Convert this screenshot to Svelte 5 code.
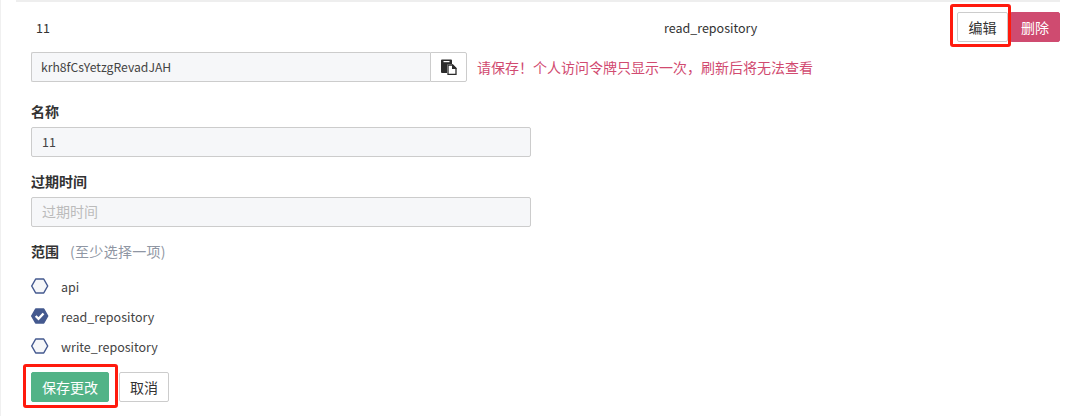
<script>
  const scopes = [
    { name: 'api', checked: false },
    { name: 'read_repository', checked: true },
    { name: 'write_repository', checked: false }
  ];
</script>

<div class="page">
  <div class="panel">
    <div class="row">
      <span class="name latin">11</span>
      <span class="scope latin">read_repository</span>
      <div class="actions">
        <button class="btn">编辑</button>
        <button class="btn danger">删除</button>
      </div>
    </div>

    <div class="token-row">
      <div class="token-group">
        <div class="field token latin">krh8fCsYetzgRevadJAH</div>
        <button class="copy" aria-label="复制">
          <svg width="16" height="16" viewBox="0 0 16 16">
            <path fill="#2b2b2b" d="M0 1.5A1 1 0 0 1 1 .5h9a1 1 0 0 1 1 1V5H7.5A1.5 1.5 0 0 0 6 6.500V14H1a1 1 0 0 1-1-1z" />
            <rect x="2.500" y="2" width="6" height="1.200" fill="#fff" />
            <path fill="#fff" stroke="#2b2b2b" stroke-width="1.300" d="M7 6h4.500L15 9.500V15.300H7z" />
            <path fill="#2b2b2b" d="M11 5.500h1L15.500 9v1H11z" />
          </svg>
        </button>
      </div>
      <span class="warn">请保存！个人访问令牌只显示一次，刷新后将无法查看</span>
    </div>

    <div class="group first">
      <div class="label">名称</div>
      <div class="field wide latin">11</div>
    </div>

    <div class="group">
      <div class="label">过期时间</div>
      <div class="field wide placeholder">过期时间</div>
    </div>

    <div class="scopes-head">
      <span class="label inline">范围</span><span class="hint">(至少选择一项)</span>
    </div>

    <ul class="scopes">
      {#each scopes as s}
        <li>
          <svg class="hex" width="18" height="16" viewBox="0 0 18 16">
            <path d="M4.700 1h8l4 7-4 7h-8l-4-7z" fill={s.checked ? '#44598f' : '#f6f7f9'} stroke="#44598f" stroke-width="1.500" stroke-linejoin="round" />
            {#if s.checked}
              <path d="M4.700 8l2.800 2.800 5-5.300" fill="none" stroke="#fff" stroke-width="2.400" />
            {/if}
          </svg>
          <span class="latin">{s.name}</span>
        </li>
      {/each}
    </ul>

    <div class="form-actions">
      <button class="btn success">保存更改</button>
      <button class="btn">取消</button>
    </div>
  </div>

  <div class="mark mark-edit"></div>
  <div class="mark mark-save"></div>
</div>

<style>
  :global(body) {
    margin: 0;
    background: #fff;
  }
  .page {
    position: relative;
    width: 1078px;
    height: 416px;
    box-sizing: border-box;
    overflow: hidden;
    border-left: 1px solid #f0f0f0;
    font-family: "Noto Sans CJK SC", "Noto Sans", sans-serif;
    font-size: 14px;
    color: #333;
  }
  .latin {
    font-size: 12.5px;
  }
  .panel {
    width: 1044px;
    margin-left: 15px;
    height: 416px;
    box-sizing: border-box;
    padding: 0 0 0 15px;
    border-top: 2px solid #eee;
  }
  .row {
    display: flex;
    align-items: center;
    height: 30px;
    margin-top: 10px;
    padding-left: 5px;
  }
  .row .latin {
    padding-top: 1px;
  }
  .name {
    width: 628px;
  }
  .actions {
    margin-left: auto;
    display: flex;
    gap: 2px;
  }
  .btn {
    height: 30px;
    box-sizing: border-box;
    border: 1px solid #ccc;
    border-radius: 2px;
    background: #fff;
    color: #333;
    font: inherit;
    font-size: 14px;
    padding: 0;
    width: 50px;
    cursor: pointer;
  }
  .actions .btn:first-child {
    width: 51px;
  }
  .danger {
    background: #cf4b70;
    border-color: #cf4b70;
    color: #fff;
  }
  .success {
    width: 78px;
    background: #52b387;
    border-color: #52b387;
    color: #fff;
  }
  .token-row {
    display: flex;
    align-items: center;
    margin-top: 10px;
    height: 30px;
  }
  .token-group {
    display: flex;
    width: 436px;
  }
  .field {
    box-sizing: border-box;
    height: 30px;
    line-height: 28px;
    border: 1px solid #ccc;
    border-radius: 2px;
    background: #f6f7f9;
    padding: 0 10px;
    color: #444;
  }
  .token {
    flex: 1;
    border-right: 0;
    border-radius: 2px 0 0 2px;
    font-size: 12.2px;
    padding-left: 9px;
  }
  .copy {
    width: 37px;
    height: 30px;
    box-sizing: border-box;
    border: 1px solid #ccc;
    border-radius: 0 2px 2px 0;
    background: #fff;
    padding: 0;
    display: flex;
    align-items: center;
    justify-content: center;
  }
  .warn {
    margin-left: 10px;
    color: #d14a70;
  }
  .group {
    margin-top: 15px;
  }
  .group.first {
    margin-top: 20px;
  }
  .label {
    font-weight: 700;
    color: #333;
    line-height: 18px;
    margin-bottom: 7px;
  }
  .label.inline {
    margin: 0;
  }
  .wide {
    width: 500px;
  }
  .placeholder {
    color: #bbb;
    line-height: 26px;
  }
  .scopes-head {
    margin-top: 14px;
    line-height: 20px;
  }
  .hint {
    color: #8f96a3;
    margin-left: 11px;
    letter-spacing: 0.3px;
  }
  .scopes {
    list-style: none;
    margin: 10px 0 0;
    padding: 0;
  }
  .scopes li {
    display: flex;
    align-items: center;
    height: 30px;
    color: #444;
  }
  .hex {
    margin-right: 12px;
  }
  .form-actions {
    display: flex;
    gap: 10px;
    margin-top: 11px;
  }
  .mark {
    position: absolute;
    box-sizing: border-box;
    border: 3px solid #ff1a0d;
    border-radius: 3px;
  }
  .mark-edit {
    left: 949px;
    top: 4px;
    width: 61px;
    height: 43px;
  }
  .mark-save {
    left: 22px;
    top: 364px;
    width: 95px;
    height: 44px;
  }
</style>
